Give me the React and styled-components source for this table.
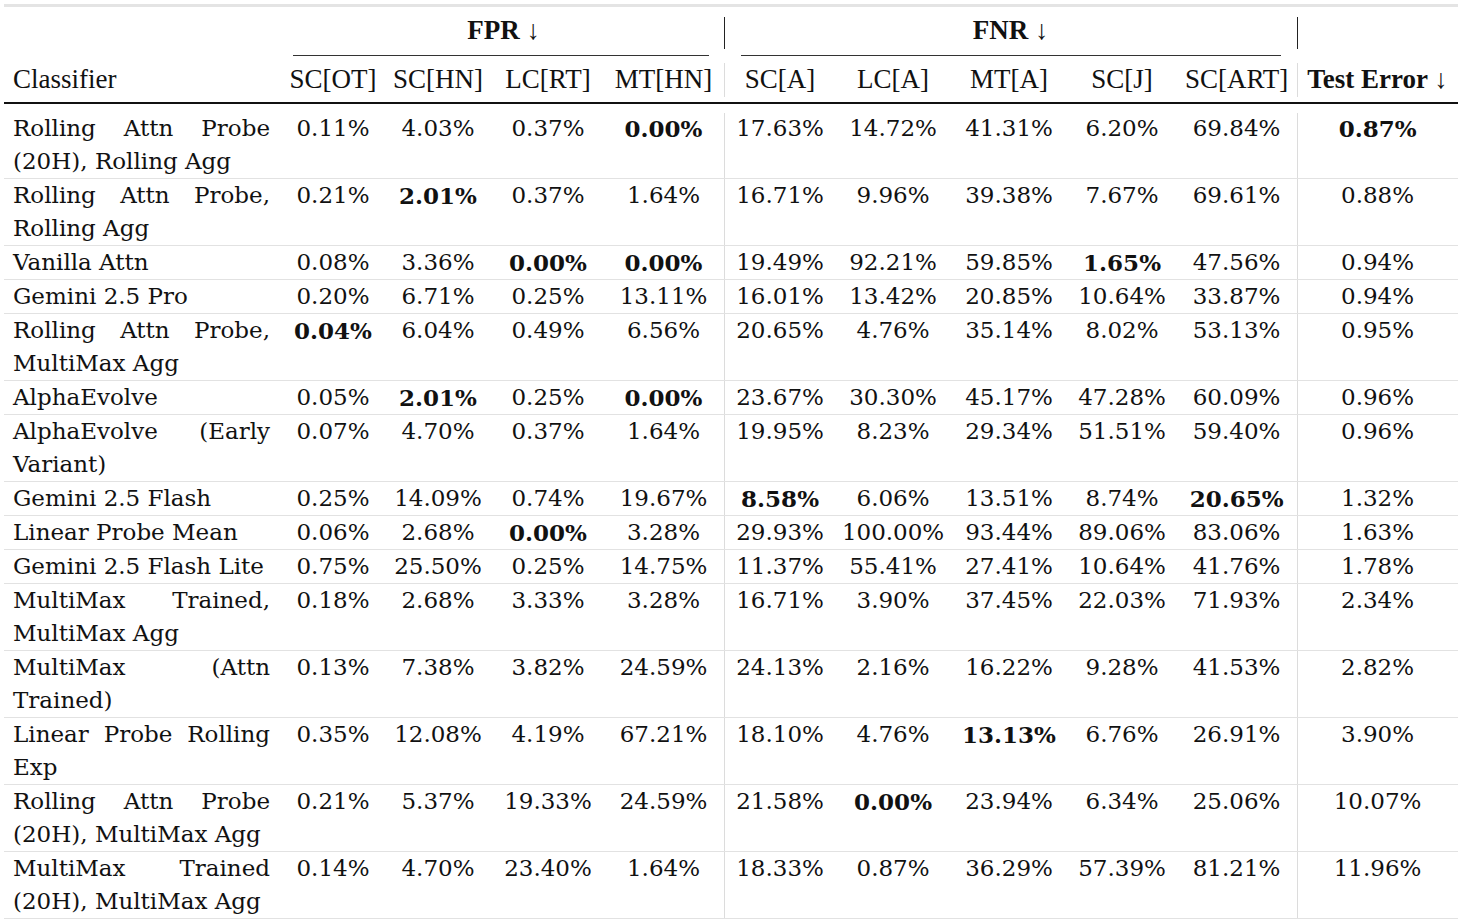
import styled, { createGlobalStyle } from "styled-components";

const GlobalStyle = createGlobalStyle`
  html, body {
    margin: 0;
    padding: 0;
    background: #ffffff;
  }
  body {
    width: 1458px;
    overflow: hidden;
  }
`;

const Container = styled.div`
  padding: 4px 0 0 4px;
  color: #111;
`;

const Table = styled.table`
  border-collapse: collapse;
  table-layout: fixed;
  width: 1454px;
  font-family: "DejaVu Serif", "Liberation Serif", serif;
`;

const vrule = (color, top, height) =>
  `linear-gradient(${color}, ${color}) no-repeat left 0 top ${top}px / 1px ${height}px`;

const GroupCell = styled.th`
  padding: 8px 0 0 0;
  font-family: "Liberation Serif", serif;
  font-size: 27px;
  font-weight: 700;
  line-height: 30px;
  text-align: center;
  vertical-align: top;
  border-top: 3px solid #e4e4e4;
  background: ${(p) => (p.$rule ? vrule("#222", 10, 32) : "none")};
`;

const GroupLine = styled.div`
  margin: 10px ${(p) => p.$right}px 0 ${(p) => p.$left}px;
  border-bottom: 1px solid #333;
  height: 0;
`;

const EmptyLine = styled.div`
  height: 11px;
`;

const HeadCell = styled.th`
  padding: 8px 0;
  font-family: "Liberation Serif", serif;
  font-size: 27px;
  font-weight: ${(p) => (p.$bold ? 700 : 400)};
  line-height: 30px;
  text-align: ${(p) => (p.$left ? "left" : "center")};
  padding-left: ${(p) => (p.$left ? "9px" : "0")};
  white-space: nowrap;
  border-bottom: 2px solid #111;
  background: ${(p) => (p.$rule ? vrule("#dcdcdc", 7, 34) : "none")};
`;

const NameCell = styled.td`
  padding: ${(p) => (p.$first ? "8px" : "0")} 13px 0 9px;
  font-size: 23px;
  line-height: 33px;
  vertical-align: top;
  border-bottom: 1px solid #e2e2e2;
`;

const NameLine = styled.div`
  text-align: ${(p) => (p.$justify ? "justify" : "left")};
  text-align-last: ${(p) => (p.$justify ? "justify" : "left")};
  white-space: ${(p) => (p.$justify ? "normal" : "nowrap")};
`;

const ValueCell = styled.td`
  padding: ${(p) => (p.$first ? "8px" : "0")} 0 0 0;
  font-size: 23px;
  line-height: 33px;
  text-align: center;
  vertical-align: top;
  white-space: nowrap;
  font-weight: ${(p) => (p.$bold ? 700 : 400)};
  border-bottom: 1px solid #e2e2e2;
  background: ${(p) =>
    p.$rule ? vrule("#dcdcdc", p.$first ? 9 : 0, 200) : "none"};
`;

const widths = [279, 100, 110, 110, 121, 112, 114, 118, 108, 121, 161];

const columns = [
  "SC[OT]",
  "SC[HN]",
  "LC[RT]",
  "MT[HN]",
  "SC[A]",
  "LC[A]",
  "MT[A]",
  "SC[J]",
  "SC[ART]",
];

// values: one string per row, "*" marks a bold entry
const rows = [
  [["Rolling Attn Probe", "(20H), Rolling Agg"], "0.11 4.03 0.37 *0.00 17.63 14.72 41.31 6.20 69.84 *0.87"],
  [["Rolling Attn Probe,", "Rolling Agg"], "0.21 *2.01 0.37 1.64 16.71 9.96 39.38 7.67 69.61 0.88"],
  [["Vanilla Attn"], "0.08 3.36 *0.00 *0.00 19.49 92.21 59.85 *1.65 47.56 0.94"],
  [["Gemini 2.5 Pro"], "0.20 6.71 0.25 13.11 16.01 13.42 20.85 10.64 33.87 0.94"],
  [["Rolling Attn Probe,", "MultiMax Agg"], "*0.04 6.04 0.49 6.56 20.65 4.76 35.14 8.02 53.13 0.95"],
  [["AlphaEvolve"], "0.05 *2.01 0.25 *0.00 23.67 30.30 45.17 47.28 60.09 0.96"],
  [["AlphaEvolve (Early", "Variant)"], "0.07 4.70 0.37 1.64 19.95 8.23 29.34 51.51 59.40 0.96"],
  [["Gemini 2.5 Flash"], "0.25 14.09 0.74 19.67 *8.58 6.06 13.51 8.74 *20.65 1.32"],
  [["Linear Probe Mean"], "0.06 2.68 *0.00 3.28 29.93 100.00 93.44 89.06 83.06 1.63"],
  [["Gemini 2.5 Flash Lite"], "0.75 25.50 0.25 14.75 11.37 55.41 27.41 10.64 41.76 1.78"],
  [["MultiMax Trained,", "MultiMax Agg"], "0.18 2.68 3.33 3.28 16.71 3.90 37.45 22.03 71.93 2.34"],
  [["MultiMax (Attn", "Trained)"], "0.13 7.38 3.82 24.59 24.13 2.16 16.22 9.28 41.53 2.82"],
  [["Linear Probe Rolling", "Exp"], "0.35 12.08 4.19 67.21 18.10 4.76 *13.13 6.76 26.91 3.90"],
  [["Rolling Attn Probe", "(20H), MultiMax Agg"], "0.21 5.37 19.33 24.59 21.58 *0.00 23.94 6.34 25.06 10.07"],
  [["MultiMax Trained", "(20H), MultiMax Agg"], "0.14 4.70 23.40 1.64 18.33 0.87 36.29 57.39 81.21 11.96"],
];

const App = () => {
  return (
    <Container>
      <GlobalStyle />
      <Table>
        <colgroup>
          {widths.map((w, i) => (
            <col key={i} style={{ width: w }} />
          ))}
        </colgroup>
        <thead>
          <tr>
            <GroupCell>
              <EmptyLine />
            </GroupCell>
            <GroupCell colSpan={4}>
              FPR ↓
              <GroupLine $left={10} $right={15} />
            </GroupCell>
            <GroupCell colSpan={5} $rule>
              FNR ↓
              <GroupLine $left={17} $right={16} />
            </GroupCell>
            <GroupCell $rule />
          </tr>
          <tr>
            <HeadCell $left>Classifier</HeadCell>
            {columns.map((c, i) => (
              <HeadCell key={c} $rule={i === 4}>
                {c}
              </HeadCell>
            ))}
            <HeadCell $bold $rule>
              Test Error ↓
            </HeadCell>
          </tr>
        </thead>
        <tbody>
          {rows.map(([name, values], r) => {
            const first = r === 0;
            return (
              <tr key={r}>
                <NameCell $first={first}>
                  {name.map((line, i) => (
                    <NameLine key={i} $justify={name.length > 1 && i === 0}>
                      {line}
                    </NameLine>
                  ))}
                </NameCell>
                {values.split(" ").map((v, i) => {
                  const bold = v.startsWith("*");
                  return (
                    <ValueCell
                      key={i}
                      $first={first}
                      $bold={bold}
                      $rule={i === 4 || i === 9}
                    >
                      {(bold ? v.slice(1) : v) + "%"}
                    </ValueCell>
                  );
                })}
              </tr>
            );
          })}
        </tbody>
      </Table>
    </Container>
  );
};

export default App;
